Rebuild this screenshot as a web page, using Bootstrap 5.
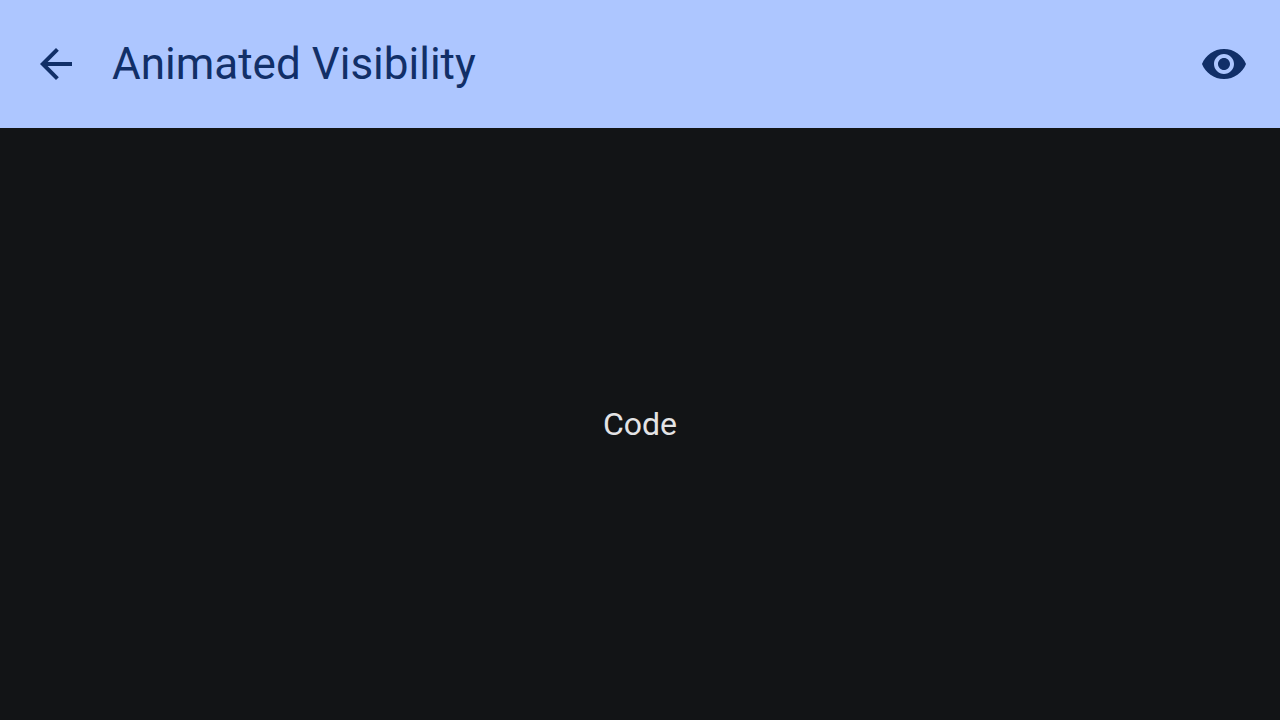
<!DOCTYPE html>
<html lang="en">
<head>
<meta charset="utf-8">
<meta name="viewport" content="width=device-width, initial-scale=1">
<title>Animated Visibility</title>
<link href="https://cdn.jsdelivr.net/npm/bootstrap@5.3.0/dist/css/bootstrap.min.css" rel="stylesheet">
<style>
body { font-family: Roboto, sans-serif; background: #121416; color: #e3e3e5; }
.app-bar { background: #adc6ff; color: #112f68; padding: 36px 32px; }
.app-title { font-size: 44px; line-height: 56px; font-weight: 400; }
.icon-btn { width: 48px; height: 48px; color: inherit; }
.icon-btn svg { width: 48px; height: 48px; fill: currentColor; }
.code-label { font-size: 32px; line-height: 48px; }
</style>
</head>
<body class="min-vh-100 d-flex flex-column">
<header class="app-bar d-flex align-items-center">
  <button type="button" class="icon-btn btn p-0 border-0 d-flex" aria-label="Back">
    <svg viewBox="0 0 24 24" aria-hidden="true"><path d="M20 11H7.83l5.59-5.59L12 4l-8 8 8 8 1.41-1.41L7.83 13H20v-2z"/></svg>
  </button>
  <h1 class="app-title mb-0 ms-4 ps-2 flex-grow-1">Animated Visibility</h1>
  <button type="button" class="icon-btn btn p-0 border-0 d-flex" aria-label="Toggle visibility">
    <svg viewBox="0 0 24 24" aria-hidden="true"><path d="M12 4.5C7 4.5 2.73 7.61 1 12c1.73 4.39 6 7.5 11 7.5s9.27-3.11 11-7.5c-1.73-4.39-6-7.5-11-7.5zM12 17c-2.76 0-5-2.24-5-5s2.24-5 5-5 5 2.24 5 5-2.24 5-5 5zm0-8c-1.66 0-3 1.34-3 3s1.34 3 3 3 3-1.34 3-3-1.34-3-3-3z"/></svg>
  </button>
</header>
<main class="flex-grow-1 d-flex align-items-center justify-content-center">
  <p class="code-label mb-0">Code</p>
</main>
<script src="https://cdn.jsdelivr.net/npm/bootstrap@5.3.0/dist/js/bootstrap.bundle.min.js"></script>
</body>
</html>
